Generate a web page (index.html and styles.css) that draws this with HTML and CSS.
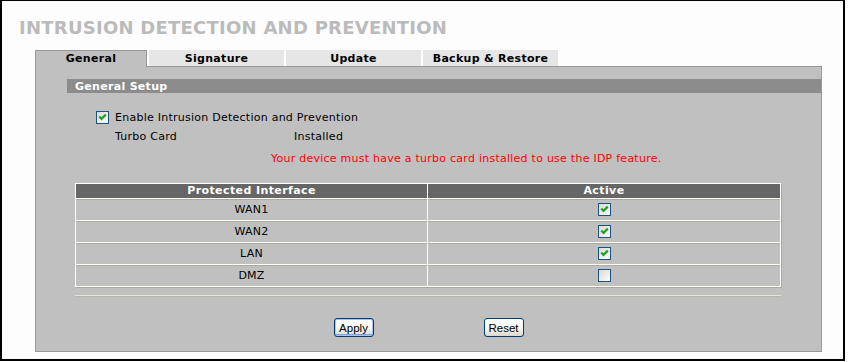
FILE: index.html
```html
<!DOCTYPE html>
<html>
<head>
<meta charset="utf-8">
<title>Intrusion Detection and Prevention</title>
<link rel="stylesheet" href="styles.css">
</head>
<body>
<div class="frame">
  <h1 class="title">INTRUSION DETECTION AND PREVENTION</h1>
  <div class="tabs">
    <div class="tab active">General</div>
    <div class="tab">Signature</div>
    <div class="tab">Update</div>
    <div class="tab">Backup &amp; Restore</div>
  </div>
  <div class="panel">
    <div class="section-bar">General Setup</div>
    <div class="opt-row">
      <svg class="cb" width="13" height="13" viewBox="0 0 13 13"><defs><linearGradient id="cbg" x1="0" y1="0" x2="1" y2="1"><stop offset="0" stop-color="#d8d8d2"/><stop offset="1" stop-color="#ffffff"/></linearGradient></defs><rect x="0.5" y="0.5" width="12" height="12" fill="url(#cbg)" stroke="#1c5180"/><path d="M3.3 5.6 L5.5 7.9 L9.8 3.6" fill="none" stroke="#21a121" stroke-width="2.2"/></svg>
      <span class="opt-label">Enable Intrusion Detection and Prevention</span>
    </div>
    <div class="info-row"><span class="info-label">Turbo Card</span><span>Installed</span></div>
    <div class="warn">Your device must have a turbo card installed to use the IDP feature.</div>
    <table class="iface">
      <thead>
        <tr><th class="col-name">Protected Interface</th><th>Active</th></tr>
      </thead>
      <tbody>
        <tr><td>WAN1</td><td><svg class="cb" width="13" height="13" viewBox="0 0 13 13"><rect x="0.5" y="0.5" width="12" height="12" fill="url(#cbg)" stroke="#1c5180"/><path d="M3.3 5.6 L5.5 7.9 L9.8 3.6" fill="none" stroke="#21a121" stroke-width="2.2"/></svg></td></tr>
        <tr><td>WAN2</td><td><svg class="cb" width="13" height="13" viewBox="0 0 13 13"><rect x="0.5" y="0.5" width="12" height="12" fill="url(#cbg)" stroke="#1c5180"/><path d="M3.3 5.6 L5.5 7.9 L9.8 3.6" fill="none" stroke="#21a121" stroke-width="2.2"/></svg></td></tr>
        <tr><td>LAN</td><td><svg class="cb" width="13" height="13" viewBox="0 0 13 13"><rect x="0.5" y="0.5" width="12" height="12" fill="url(#cbg)" stroke="#1c5180"/><path d="M3.3 5.6 L5.5 7.9 L9.8 3.6" fill="none" stroke="#21a121" stroke-width="2.2"/></svg></td></tr>
        <tr><td>DMZ</td><td><svg class="cb" width="13" height="13" viewBox="0 0 13 13"><rect x="0.5" y="0.5" width="12" height="12" fill="url(#cbg)" stroke="#1c5180"/></svg></td></tr>
      </tbody>
    </table>
    <div class="sep"></div>
    <div class="buttons">
      <button class="btn default">Apply</button>
      <button class="btn">Reset</button>
    </div>
  </div>
</div>
</body>
</html>
```
FILE: styles.css
```css
* { box-sizing: border-box; }

body {
  margin: 0;
  background: #ffffff;
  font-family: "DejaVu Sans", Verdana, sans-serif;
  font-size: 11px;
  letter-spacing: 0.25px;
  color: #000;
}

.frame {
  width: 845px;
  height: 361px;
  border: 2px solid #000;
  border-top-width: 1px;
  padding-top: 17px;
  background: #fdfdfd;
}

.title {
  margin: 0 0 12px 17px;
  font: bold 18px/20px "DejaVu Sans", Verdana, sans-serif;
  letter-spacing: 0.25px;
  color: #bbbbbb;
}

.tabs {
  display: flex;
  align-items: flex-start;
  gap: 2px;
  margin-left: 33px;
  height: 16px;
}

.tab {
  width: 135px;
  height: 16px;
  padding-top: 1px;
  background: #e6e6e6;
  text-align: center;
  font-weight: bold;
  letter-spacing: 0.3px;
  line-height: 15px;
}

.tab.active {
  width: 112px;
  height: 17px;
  padding-top: 0;
  margin-bottom: -1px;
  background: #c0c0c0;
  border: 1px solid #999;
  border-bottom: none;
  position: relative;
  z-index: 1;
}

.panel {
  margin-left: 33px;
  width: 787px;
  height: 286px;
  background: #c0c0c0;
  border: 1px solid #999;
  padding-top: 12px;
}

.section-bar {
  margin-left: 31px;
  height: 14px;
  padding: 1px 0 0 8px;
  line-height: 13px;
  background: #8c8c8c;
  color: #fff;
  font-weight: bold;
  letter-spacing: 0.3px;
}

.opt-row {
  display: flex;
  align-items: center;
  height: 20px;
  margin: 14px 0 0 60px;
}

.cb { display: block; }

.opt-label { margin-left: 6px; }

.info-row {
  display: flex;
  height: 20px;
  line-height: 20px;
  margin-left: 79px;
}

.info-label { width: 179px; }

.warn {
  margin: 2px 0 0 235px;
  line-height: 20px;
  color: #ff0000;
}

.iface {
  margin: 14px 0 0 39px;
  width: 706px;
  border-collapse: separate;
  border-spacing: 0;
  border-top: 1px solid #fff;
  border-left: 1px solid #fff;
  box-shadow: 1px 1px 0 #aaa69a;
}

.iface th,
.iface td {
  padding: 0;
  text-align: center;
  border-right: 1px solid #fff;
  border-bottom: 1px solid #fff;
}

.iface th {
  height: 15px;
  line-height: 14px;
  background: #666666;
  color: #fff;
  font-weight: bold;
  letter-spacing: 0.4px;
}

.iface th.col-name { width: 352px; }

.iface td {
  height: 22px;
  box-shadow: inset 0 1px 0 #aeaa9e;
}

.iface td .cb { margin: 0 auto; }

.sep {
  margin: 8px 0 0 39px;
  width: 706px;
  height: 2px;
  border-top: 1px solid #e8e4d6;
  border-bottom: 1px solid #b8b4a6;
}

.buttons {
  display: flex;
  justify-content: center;
  gap: 110px;
  margin-top: 21px;
}

.btn {
  width: 40px;
  height: 19px;
  padding: 0;
  border: 1px solid #003c74;
  border-radius: 3px;
  background: linear-gradient(#ffffff, #f6f6f2 55%, #dcd7cc);
  font: 11.5px "Liberation Sans", Arial, sans-serif;
  letter-spacing: 0;
  color: #000;
}

.btn.default {
  box-shadow: inset 0 0 0 1px #a9c4ef, inset 0 -1px 0 1px #7ea4e0;
}
```
